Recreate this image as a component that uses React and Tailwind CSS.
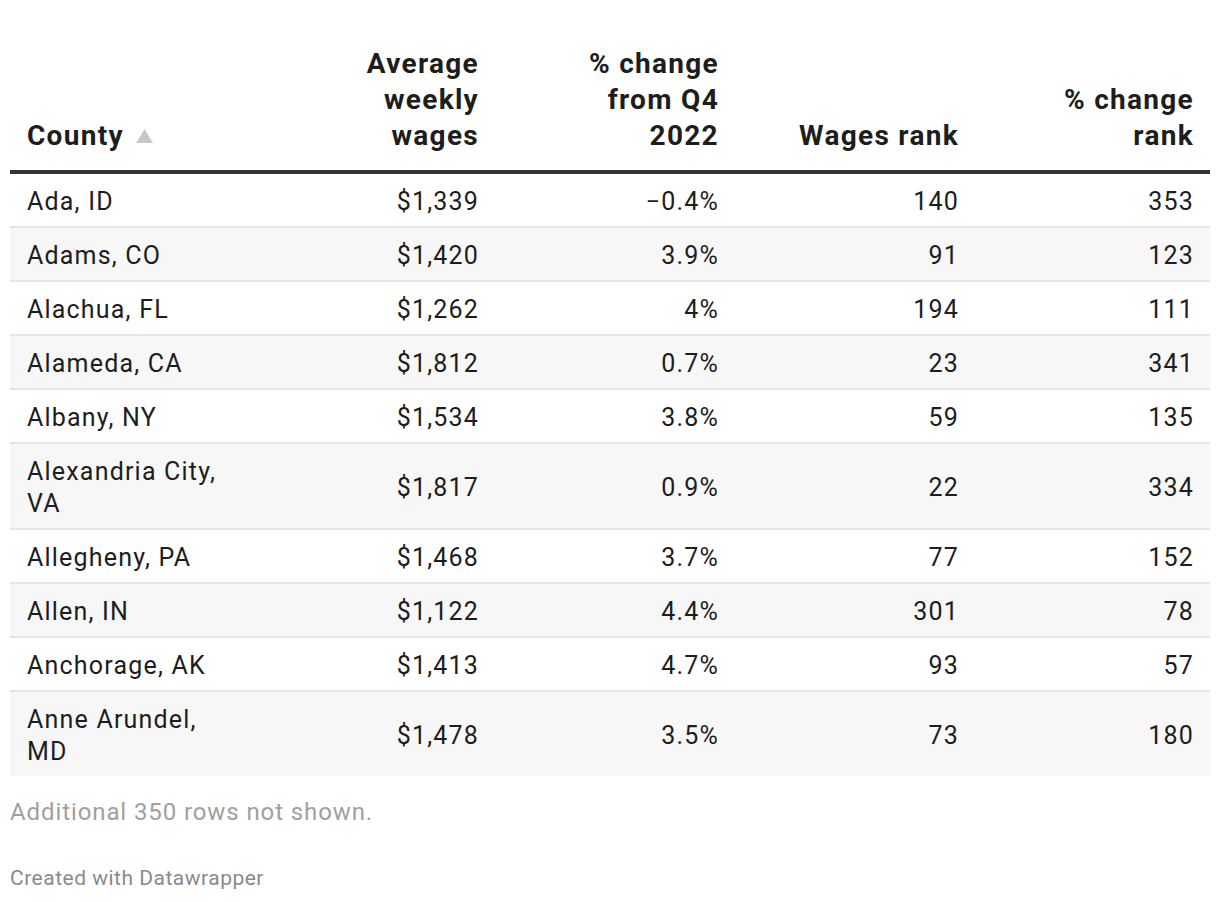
import React from 'react';

const rows = [
  ['Ada, ID', '$1,339', '−0.4%', '140', '353'],
  ['Adams, CO', '$1,420', '3.9%', '91', '123'],
  ['Alachua, FL', '$1,262', '4%', '194', '111'],
  ['Alameda, CA', '$1,812', '0.7%', '23', '341'],
  ['Albany, NY', '$1,534', '3.8%', '59', '135'],
  ['Alexandria City, VA', '$1,817', '0.9%', '22', '334'],
  ['Allegheny, PA', '$1,468', '3.7%', '77', '152'],
  ['Allen, IN', '$1,122', '4.4%', '301', '78'],
  ['Anchorage, AK', '$1,413', '4.7%', '93', '57'],
  ['Anne Arundel, MD', '$1,478', '3.5%', '73', '180'],
];

const SortUp = () => (
  <svg className="inline-block ml-[12px] align-[2px]" width="17" height="14" viewBox="0 0 17 14">
    <path d="M8.5 0 L17 14 L0 14 Z" fill="#c8c8c8" />
  </svg>
);

const App = () => {
  return (
    <div className="bg-white w-[1220px] h-[902px] px-[10px] pt-[46px] text-[#1d1d1d]" style={{ fontFamily: 'Roboto, sans-serif' }}>
      <table className="w-full table-fixed border-collapse">
        <colgroup>
          <col className="w-[240px]" />
          <col className="w-[240px]" />
          <col className="w-[240px]" />
          <col className="w-[240px]" />
          <col className="w-[240px]" />
        </colgroup>
        <thead>
          <tr className="border-b-[4px] border-[#333333] text-[28px] font-bold leading-[36px] tracking-[1.3px] align-bottom">
            <th className="text-left pl-[17px] pr-3 pb-[16px] whitespace-nowrap">
              County
              <SortUp />
            </th>
            <th className="text-right pl-[40px] pr-[11px] pb-[16px]">Average weekly wages</th>
            <th className="text-right pl-[40px] pr-[11px] pb-[16px]">% change from Q4 2022</th>
            <th className="text-right pl-[40px] pr-[11px] pb-[16px]">Wages rank</th>
            <th className="text-right pl-[40px] pr-[16px] pb-[16px]">% change rank</th>
          </tr>
        </thead>
        <tbody className="text-[25px] leading-[32px] tracking-[1.2px]">
          {rows.map((r, i) => (
            <tr
              key={i}
              className={`${i % 2 === 1 ? 'bg-[#f7f7f7]' : 'bg-white'} ${i < rows.length - 1 ? 'border-b-2 border-[#e6e6e6]' : ''}`}
            >
              <td className="pl-[17px] pr-3 pt-[12px] pb-[8px] align-middle">{r[0]}</td>
              <td className="text-right pr-[11px] pt-[12px] pb-[8px]">{r[1]}</td>
              <td className="text-right pr-[11px] pt-[12px] pb-[8px]">{r[2]}</td>
              <td className="text-right pr-[11px] pt-[12px] pb-[8px]">{r[3]}</td>
              <td className="text-right pr-[16px] pt-[12px] pb-[8px]">{r[4]}</td>
            </tr>
          ))}
        </tbody>
      </table>
      <p className="mt-[20px] text-[24px] leading-[32px] tracking-[0.9px] text-[#a0a0a0]">Additional 350 rows not shown.</p>
      <p className="mt-[36px] text-[21px] leading-[28px] tracking-[0.5px] text-[#8a8a8a]">Created with Datawrapper</p>
    </div>
  );
};

export default App;
